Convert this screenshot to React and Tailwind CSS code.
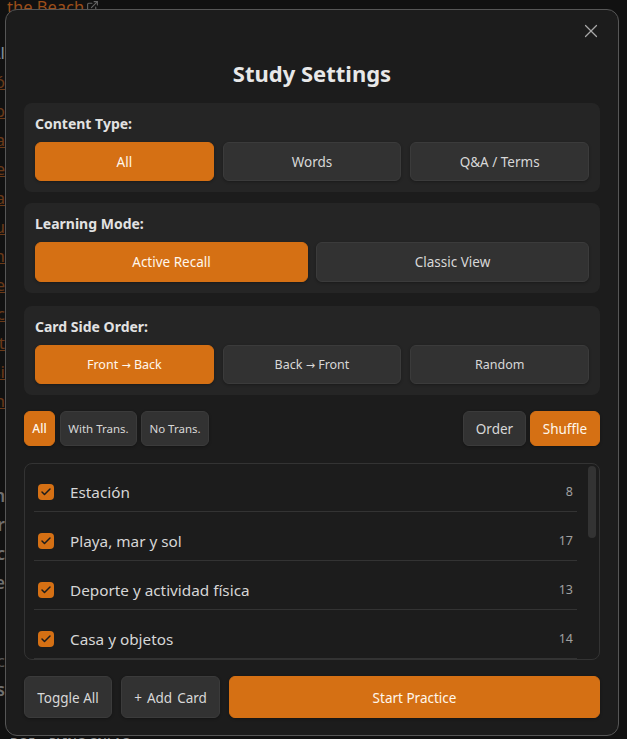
import React from "react";
import { X, Check, ExternalLink } from "lucide-react";

const sideLines = [
  { text: "Al", plain: true },
  { text: "ó" },
  { text: "p" },
  { text: "a" },
  { text: "e" },
  { text: "a" },
  { text: "u" },
  { text: "m" },
  { text: "e" },
  { text: "c" },
  { text: "t" },
  { text: "si" },
  { text: "n" },
];

const lowerLines = ["n", "r", "ic", "e"];

const decks = [
  { name: "Estación", count: 8 },
  { name: "Playa, mar y sol", count: 17 },
  { name: "Deporte y actividad física", count: 13 },
  { name: "Casa y objetos", count: 14 },
];

const Arrow = () => <span className="font-['DejaVu_Sans',sans-serif] text-[11px]">→</span>;

const Btn = ({ active, className = "", children }) => (
  <button
    className={`flex items-center justify-center rounded-md border shadow-[0_1px_3px_rgba(0,0,0,0.3)] ${
      active
        ? "border-[#d57014] bg-[#d57014] text-[#fff7ec]"
        : "border-[#3b3b3b] bg-[#323232] text-[#d8d8d8]"
    } ${className}`}
  >
    {children}
  </button>
);

const Section = ({ title, className = "", children }) => (
  <section className={`rounded-lg bg-[#252525] p-[11px] ${className}`}>
    <h3 className="mb-[9px] text-[14px] leading-[19px] font-bold text-[#e2e2e2]">
      {title}
    </h3>
    {children}
  </section>
);

const App = () => {
  return (
    <div className="relative h-screen w-full overflow-hidden bg-[#111111] font-['Noto_Sans',sans-serif]">
      {/* page behind the dialog, only its edges show */}
      <div className="flex h-[29px] items-start pl-[7px] text-[16.5px] leading-[13px] text-[#9c4e1a]">
        <span className="underline">the Beach</span>
        <ExternalLink size={13} className="ml-[2px] text-[#666666]" />
      </div>
      <div className="mt-[9px] flex w-[5px] flex-col items-end overflow-hidden text-[17px] leading-[29px]">
        {sideLines.map((l, i) => (
          <span
            key={i}
            className={`h-[29px] whitespace-nowrap ${
              l.plain ? "text-[#7f919f]" : "text-[#6b3a18] underline"
            }`}
          >
            {l.text}
          </span>
        ))}
      </div>
      <div className="mt-[66px] flex w-[5px] flex-col items-end overflow-hidden text-[17px] leading-[29px] font-semibold text-[#707070]">
        {lowerLines.map((l, i) => (
          <span key={i} className="h-[29px] whitespace-nowrap">
            {l}
          </span>
        ))}
        <span className="mt-[49px] h-[29px] font-normal text-[#555555]">c</span>
        <span className="h-[29px] whitespace-nowrap text-[#707070]">s</span>
      </div>

      {/* dialog */}
      <div className="absolute top-[9px] left-[5px] flex h-[727px] w-[614px] flex-col rounded-xl border border-[#565656] bg-[#1c1c1c] px-[18px] pt-[47px]">
        <button className="absolute top-[10px] right-[16px] text-[#a8a8a8]">
          <X size={22} strokeWidth={1.3} />
        </button>

        <h2 className="mb-[13px] text-center text-[22px] leading-[33px] font-bold text-[#e8e8e8]">
          Study Settings
        </h2>

        <Section title="Content Type:" className="mb-[11px]">
          <div className="grid grid-cols-3 gap-[9px] text-[13.5px]">
            <Btn active className="h-[39px] pt-[2px]">All</Btn>
            <Btn className="h-[39px] pt-[2px]">Words</Btn>
            <Btn className="h-[39px] pt-[2px]">Q&amp;A / Terms</Btn>
          </div>
        </Section>

        <Section title="Learning Mode:" className="mb-[13px]">
          <div className="grid grid-cols-2 gap-[8px] text-[13.5px]">
            <Btn active className="h-[40px]">Active Recall</Btn>
            <Btn className="h-[40px]">Classic View</Btn>
          </div>
        </Section>

        <Section title="Card Side Order:" className="mb-[16px]">
          <div className="grid grid-cols-3 gap-[9px] text-[12.5px]">
            <Btn active className="h-[39px] pt-[2px]">
              <span>Front <Arrow /> Back</span>
            </Btn>
            <Btn className="h-[39px] pt-[2px]">
              <span>Back <Arrow /> Front</span>
            </Btn>
            <Btn className="h-[39px] pt-[2px]">Random</Btn>
          </div>
        </Section>

        <div className="mb-[17px] flex h-[35px] items-stretch">
          <Btn active className="w-[31px] pt-px text-[12px] font-medium">All</Btn>
          <Btn className="ml-[5px] w-[77px] pt-px text-[11.5px]">With Trans.</Btn>
          <Btn className="ml-[4px] w-[68px] pt-px text-[11.5px]">No Trans.</Btn>
          <Btn className="ml-auto w-[63px] pt-px text-[13.5px]">Order</Btn>
          <Btn active className="ml-[4px] w-[70px] pt-px text-[13.5px]">Shuffle</Btn>
        </div>

        <div className="relative mb-[16px] h-[197px] overflow-hidden rounded-lg border border-[#333333] px-[9px]">
          <div className="mr-[13px]">
            {decks.map((d) => (
              <div
                key={d.name}
                className="flex h-[49px] items-center border-b border-[#333333] pt-[10px] pr-[4px] pl-[4px] first:h-[48px] first:pt-[9px]"
              >
                <span className="flex h-[16px] w-[16px] items-center justify-center rounded-[4px] bg-[#d57014]">
                  <Check size={12} strokeWidth={3} className="text-[#1c1c1c]" />
                </span>
                <span className="ml-[16px] flex-1 text-[15.3px] text-[#d6d6d6]">{d.name}</span>
                <span className="text-[12.5px] text-[#a0a0a0]">{d.count}</span>
              </div>
            ))}
          </div>
          <div className="absolute top-[2px] right-[3px] h-[72px] w-[8px] rounded-full bg-[#333333]" />
        </div>

        <div className="flex h-[42px] items-stretch text-[13.5px]">
          <Btn className="w-[88px] pt-[2px]">Toggle All</Btn>
          <Btn className="ml-[9px] w-[99px] pt-[2px] [word-spacing:1.5px]">+ Add Card</Btn>
          <Btn active className="ml-[9px] flex-1 pt-[2px]">Start Practice</Btn>
        </div>
      </div>

      {/* last line of the page peeks out under the dialog */}
      <div className="absolute top-[736px] left-[10px] flex gap-[14px] text-[12px] leading-[14px] font-semibold text-[#8a8a8a]">
        <span>DOE</span>
        <span>PLING GNLAG</span>
      </div>
    </div>
  );
};

export default App;
